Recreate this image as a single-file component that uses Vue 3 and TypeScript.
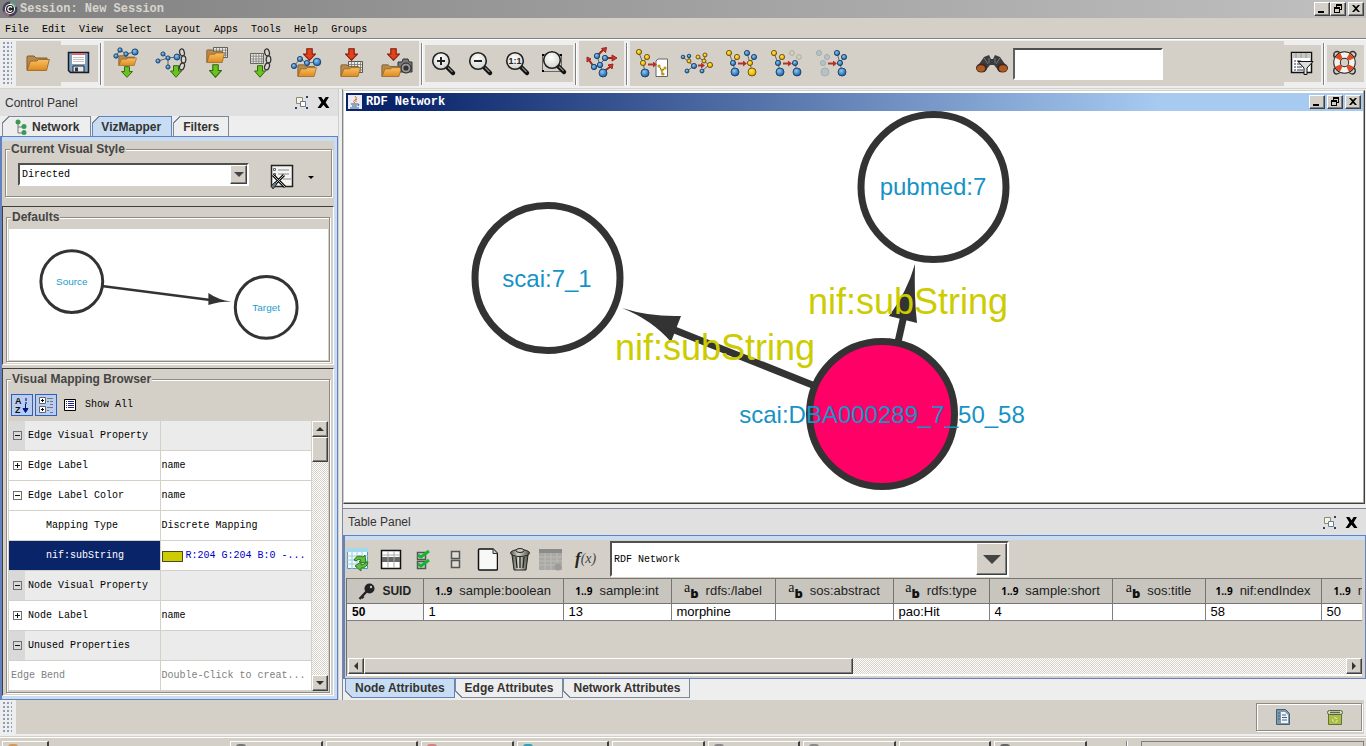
<script setup lang="ts">
import { ref } from 'vue'

type Ball = [number, number, number, string]
interface GraphIcon {
  label: string
  edges: string
  arrow: string
  balls: Ball[]
  page?: boolean
}

const menus = ['File', 'Edit', 'View', 'Select', 'Layout', 'Apps', 'Tools', 'Help', 'Groups']

const b = 'url(#gBlue)'
const y = 'url(#gYellow)'
const fadedBlue = '#b4c2ca'
const fadedYellow = '#d8cfae'

const tree = 'M9 12L13 22L17 16M13 22L15 31'
const treeRight = 'M27 12L30 22L34 16M30 22L32 31'

const graphIcons: GraphIcon[] = [
  {
    label: 'New network from selection',
    edges: tree,
    arrow: 'M18 23.5h6',
    page: true,
    balls: [[9, 11, 2.6, y], [17, 16, 2.6, y], [13, 22, 2.6, y], [15, 32, 4, b]],
  },
  {
    label: 'Clone network',
    edges: 'M8 16L14 21L14 15M14 21L19 25L12 30M23 16L29 20L30 15M29 20L34 24L27 30',
    arrow: 'M23 24.5h4',
    balls: [
      [8, 16, 1.8, b], [14, 15, 1.8, b], [14, 20, 2, y], [19, 25, 2.6, b], [12, 30, 2, b],
      [23, 16, 2, y], [30, 14, 2, y], [29, 20, 2, y], [35, 24, 2.6, y], [27, 30, 2, b],
    ],
  },
  {
    label: 'Invert node selection',
    edges: tree + treeRight,
    arrow: 'M18 22.5h6',
    balls: [
      [9, 12, 2.6, y], [17, 16, 2.6, y], [13, 22, 2.6, b], [15, 31, 4, b],
      [27, 12, 2.6, b], [34, 16, 2.6, b], [30, 22, 2.6, y], [32, 31, 4, y],
    ],
  },
  {
    label: 'Hide selected',
    edges: tree + 'M30 22L32 31',
    arrow: 'M18 22.5h6',
    balls: [
      [9, 12, 2.6, y], [17, 16, 2.6, y], [13, 22, 2.6, b], [15, 31, 4, b],
      [27, 12, 2.4, fadedYellow], [34, 16, 2.4, fadedYellow], [30, 22, 2.6, b], [32, 31, 4, b],
    ],
  },
  {
    label: 'Show all',
    edges: treeRight,
    arrow: 'M18 22.5h6',
    balls: [
      [9, 12, 2.6, fadedBlue], [17, 16, 2.6, fadedBlue], [13, 22, 2.6, fadedBlue], [15, 31, 4, fadedBlue],
      [27, 12, 2.6, b], [34, 16, 2.6, b], [30, 22, 2.6, b], [32, 31, 4, b],
    ],
  },
]

function rim(fill: string): string {
  if (fill === b) return '#1c3f63'
  if (fill === y) return '#6b4e0c'
  return '#a3aaa8'
}

interface PropertyRow {
  name: string
  value: string
  kind: 'group' | 'prop' | 'child' | 'selected' | 'unused'
  sign?: '+' | '-'
}
const rows: PropertyRow[] = [
  { name: 'Edge Visual Property', value: '', kind: 'group', sign: '-' },
  { name: 'Edge Label', value: 'name', kind: 'prop', sign: '+' },
  { name: 'Edge Label Color', value: 'name', kind: 'prop', sign: '-' },
  { name: 'Mapping Type', value: 'Discrete Mapping', kind: 'child' },
  { name: 'nif:subString', value: 'R:204 G:204 B:0 -...', kind: 'selected' },
  { name: 'Node Visual Property', value: '', kind: 'group', sign: '-' },
  { name: 'Node Label', value: 'name', kind: 'prop', sign: '+' },
  { name: 'Unused Properties', value: '', kind: 'group', sign: '-' },
  { name: 'Edge Bend', value: 'Double-Click to creat...', kind: 'unused' },
]

const columns = [
  { name: 'SUID', type: 'key', width: 76, value: '50' },
  { name: 'sample:boolean', type: 'num', width: 140, value: '1' },
  { name: 'sample:int', type: 'num', width: 108, value: '13' },
  { name: 'rdfs:/label', type: 'str', width: 104, value: 'morphine' },
  { name: 'sos:abstract', type: 'str', width: 118, value: '' },
  { name: 'rdfs:type', type: 'str', width: 96, value: 'pao:Hit' },
  { name: 'sample:short', type: 'num', width: 123, value: '4' },
  { name: 'sos:title', type: 'str', width: 93, value: '' },
  { name: 'nif:endIndex', type: 'num', width: 116, value: '58' },
  { name: 'nif:beginIndex', type: 'num', width: 132, value: '50' },
]

const taskColors = ['#777777', '', '#d98080', '#2aa5b8', '', '#8a8a8a', '#8a8a8a', '', '#666666']
const search = ref('')
</script>

<template>
  <div class="app">
    <svg class="defs" aria-hidden="true">
      <defs>
        <radialGradient id="gBlue" cx=".4" cy=".35" r=".7"><stop offset="0" stop-color="#8cc8f4" /><stop offset=".6" stop-color="#3f86c8" /><stop offset="1" stop-color="#1d4f86" /></radialGradient>
        <radialGradient id="gYellow" cx=".4" cy=".35" r=".7"><stop offset="0" stop-color="#ffe94a" /><stop offset=".6" stop-color="#f3bd10" /><stop offset="1" stop-color="#c08c10" /></radialGradient>
        <linearGradient id="gFolder" x2="0" y2="1"><stop offset="0" stop-color="#f9bf62" /><stop offset="1" stop-color="#e08a1c" /></linearGradient>
        <radialGradient id="gLens" cx=".45" cy=".35" r=".7"><stop offset="0" stop-color="#fff" /><stop offset="1" stop-color="#cfcfcb" /></radialGradient>
        <linearGradient id="gCan"><stop offset="0" stop-color="#55534a" /><stop offset=".4" stop-color="#d8d6c8" /><stop offset="1" stop-color="#55534a" /></linearGradient>
      </defs>
      <symbol id="folder" viewBox="0 0 24 16" preserveAspectRatio="none">
        <path d="M1 15V2q0-1 1-1h6l2 2h11v4" fill="#b98a4c" stroke="#7a5a30" />
        <path d="M1 15.4L4.5 6H11l1.5-1.500H23.4L20.5 15.4z" fill="url(#gFolder)" stroke="#8a5f20" stroke-width=".8" />
      </symbol>
      <symbol id="down" viewBox="0 0 12 13" preserveAspectRatio="none">
        <path d="M3.5.7h5V6h3L6 12.3.5 6h3z" stroke-width="1" />
      </symbol>
      <symbol id="grid" viewBox="0 0 15 12" preserveAspectRatio="none">
        <path d="M.5.5h14v11H.5z" fill="#eceae4" stroke="#555" />
        <path d="M.5 3.5h14M.5 6.5h14M.5 9h14M3.5.5v11M6.5.5v11M9.5.5v11M12.5.5v11" stroke="#777" stroke-width=".8" />
      </symbol>
      <symbol id="chain" viewBox="0 0 9 23">
        <g fill="#d8d6ce" stroke="#333" stroke-width="1.3">
          <ellipse cx="4" cy="4.500" rx="2.300" ry="3.600" transform="rotate(-15 4 4.500)" />
          <ellipse cx="5.500" cy="11.500" rx="2.300" ry="3.600" />
          <ellipse cx="4" cy="18.500" rx="2.300" ry="3.600" transform="rotate(20 4 18.500)" />
        </g>
      </symbol>
      <symbol id="float" viewBox="0 0 13 13">
        <path d="M1.500 1.500h6v6h-6z" fill="#f4f4ea" stroke="#8c8c6c" />
        <path d="M5.500 5.500h5v5h-5z" fill="#fff" stroke="#6b7c8c" />
        <path d="M11 0h2v2h-2zM0 11h2v2H0zM11 11h2v2h-2z" fill="#2d3d70" />
      </symbol>
      <symbol id="close" viewBox="0 0 12 12">
        <path d="M1 1h3l2 3 2-3h3L8 6l3.500 5H8.500L6 8l-2.500 3H.5L4 6z" fill="#000" />
      </symbol>
      <symbol id="lens" viewBox="0 0 37 37">
        <path d="M22 22l6 6" stroke="#111" stroke-width="4.500" stroke-linecap="round" />
        <path d="M23 22.500l4.500 4.500" stroke="#888" stroke-width="1.200" />
        <circle cx="16" cy="16" r="8.300" fill="url(#gLens)" stroke="#222" stroke-width="1.600" />
      </symbol>
    </svg>

    <header class="titlebar">
      <svg class="logo" viewBox="0 0 16 16" aria-hidden="true">
        <circle cx="8" cy="8" r="7.500" fill="#46405e" />
        <path d="M8 .5a7.500 7.500 0 0 1 7 5L8 8z" fill="#67a08b" /><path d="M1 11a7.500 7.500 0 0 0 6 4.500L8 8z" fill="#8f6a7c" />
        <circle cx="8" cy="8" r="5" fill="#fff" /><circle cx="8" cy="8" r="4" fill="#222" />
        <path d="M10 6.600a2.300 2.300 0 1 0 0 2.800" fill="none" stroke="#fff" stroke-width="1.300" />
      </svg>
      <h1>Session: New Session</h1>
      <div class="winbtns">
        <button class="winbtn" aria-label="Minimize"><svg viewBox="0 0 12 10"><path d="M2 7h6v2H2z" /></svg></button>
        <button class="winbtn" aria-label="Restore"><svg viewBox="0 0 12 10"><path d="M4 0h6v6H8V5h1V2H5v1H4zM2 3h6v6H2zM3 5v3h4V5z" fill-rule="evenodd" /></svg></button>
        <button class="winbtn spaced" aria-label="Close"><svg viewBox="0 0 12 10"><path d="M2 1h2l2 2 2-2h2L7 4.500 10 8H8L6 6 4 8H2l3-3.500z" /></svg></button>
      </div>
    </header>

    <nav class="menubar">
      <button v-for="m in menus" :key="m">{{ m }}</button>
    </nav>

    <div class="toolbar">
      <span class="grip"></span>
      <button class="tool big" aria-label="Open"><svg viewBox="0 0 45 45"><use href="#folder" x="10" y="14" width="24" height="16" /></svg></button>
      <button class="tool small" aria-label="Save">
        <svg viewBox="0 0 37 37">
          <path d="M7.500 7.500h20v20h-18l-2-2z" fill="#7f9fbd" stroke="#111c28" stroke-width="1.500" />
          <path d="M11 8h13v11H11z" fill="#fff" /><path d="M11 8h13v2H11z" fill="#d66" />
          <path d="M12 12.500h11M12 14.500h11M12 16.500h11" stroke="#c4c4c4" />
          <path d="M12 21h11v6H12z" fill="#e4e4e4" stroke="#222" /><path d="M14 22.500h3v4h-3z" fill="#335" />
        </svg>
      </button>
      <span class="sep"></span>
      <button class="tool big" aria-label="Import network from file">
        <svg viewBox="0 0 45 45">
          <use href="#folder" x="14" y="14" width="19" height="11" />
          <path d="M12 15L16 9L22 13L31 11" stroke="#567" fill="none" />
          <circle v-for="(c, i) in [[12, 15, 2.2], [16, 9, 2.2], [22, 13, 2.2], [31, 11, 3.1]]" :key="i" class="ball" :cx="c[0]" :cy="c[1]" :r="c[2]" />
          <use href="#down" class="green" x="17" y="25" width="12" height="12" />
        </svg>
      </button>
      <button class="tool big" aria-label="Import network from URL">
        <svg viewBox="0 0 45 45">
          <path d="M9 20L19 17L28 16M14 13L19 17V26" stroke="#567" fill="none" />
          <circle v-for="(c, i) in [[9, 20, 2.1], [14, 13, 2.1], [19, 17, 2.1], [28, 16, 3], [19, 26, 2.1]]" :key="i" class="ball" :cx="c[0]" :cy="c[1]" :r="c[2]" />
          <use href="#chain" x="29" y="7" width="9" height="23" />
          <use href="#down" class="green" x="21" y="24" width="12" height="13" />
        </svg>
      </button>
      <button class="tool big" aria-label="Import table from file">
        <svg viewBox="0 0 45 45">
          <use href="#grid" x="19" y="6" width="15" height="11" />
          <use href="#folder" x="12" y="8" width="19" height="14" />
          <use href="#down" class="green" x="15" y="23" width="13" height="14" />
        </svg>
      </button>
      <button class="tool big" aria-label="Import table from URL">
        <svg viewBox="0 0 45 45">
          <use href="#grid" x="11" y="12" width="14" height="11" />
          <use href="#chain" x="24" y="7" width="9" height="23" />
          <use href="#down" class="green" x="15" y="24" width="12" height="13" />
        </svg>
      </button>
      <button class="tool big" aria-label="Export network">
        <svg viewBox="0 0 45 45">
          <use href="#down" class="red" x="19" y="7" width="13" height="13" />
          <use href="#folder" x="13" y="23" width="20" height="13" />
          <path d="M10 25L16 18L23 22L33 21" stroke="#567" fill="none" />
          <circle v-for="(c, i) in [[10, 25, 2.6], [16, 18, 2.6], [23, 22, 2.6], [33, 21, 3.8]]" :key="i" class="ball" :cx="c[0]" :cy="c[1]" :r="c[2]" />
        </svg>
      </button>
      <button class="tool big" aria-label="Export table">
        <svg viewBox="0 0 45 45">
          <use href="#down" class="red" x="16" y="7" width="13" height="13" />
          <use href="#grid" x="19" y="20" width="15" height="12" />
          <use href="#folder" x="11" y="23" width="21" height="13" />
        </svg>
      </button>
      <button class="tool big" aria-label="Export image">
        <svg viewBox="0 0 45 45">
          <use href="#down" class="red" x="13" y="7" width="13" height="13" />
          <path d="M24 21h4l1-3h5l1 3h3v10H24z" fill="#777" stroke="#333" />
          <use href="#folder" x="7" y="23" width="21" height="13" />
          <circle cx="32" cy="27" r="5" fill="#999" stroke="#222" /><circle cx="32" cy="27" r="2.600" fill="#333" />
        </svg>
      </button>
      <span class="sep"></span>
      <button class="tool small" aria-label="Zoom in"><svg viewBox="0 0 37 37"><use href="#lens" width="37" height="37" /><path d="M12 16h8M16 12v8" stroke="#222" stroke-width="2" /></svg></button>
      <button class="tool small" aria-label="Zoom out"><svg viewBox="0 0 37 37"><use href="#lens" width="37" height="37" /><path d="M12 16h8" stroke="#222" stroke-width="2" /></svg></button>
      <button class="tool small" aria-label="Zoom to 100%"><svg viewBox="0 0 37 37"><use href="#lens" width="37" height="37" /><text x="16" y="19" text-anchor="middle" class="ratio">1:1</text></svg></button>
      <button class="tool small" aria-label="Zoom to fit"><svg viewBox="0 0 37 37"><path d="M6.500 9.500h19v17h-19z" fill="none" stroke="#000" stroke-dasharray="1 1" /><path d="M6 9h2v2H6zM24 9h2v2h-2zM6 25h2v2H6z" /><use href="#lens" y="-1" width="37" height="37" /></svg></button>
      <span class="sep"></span>
      <button class="tool big" aria-label="Apply layout">
        <svg viewBox="0 0 45 45">
          <path d="M18 15L21 24L26 17M15 26L21 24L24 32" stroke="#567" fill="none" />
          <g stroke="#a3241c" stroke-width="2" fill="#c4392c">
            <path d="M18 15L24 9M26 17H34M15 26L10 19M24 31L31 26" />
            <path d="M22.500 7.500l5-1-1 5zM33 14l5 3-5 3zM8 21l0-5 4 2zM29 24l5-1-1 5z" stroke-width="1" />
          </g>
          <circle v-for="(c, i) in [[24, 32, 4], [15, 26, 2.7], [18, 15, 2.7], [26, 17, 2.7], [21, 24, 2.7]]" :key="i" class="ball" :cx="c[0]" :cy="c[1]" :r="c[2]" />
        </svg>
      </button>
      <span class="sep"></span>
      <div class="wide">
        <button v-for="g in graphIcons" :key="g.label" class="tool big" :aria-label="g.label">
          <svg viewBox="0 0 45 45">
            <template v-if="g.page">
              <path d="M26 20l2-2h9.500v17.500H26z" fill="#fff" stroke="#666" />
              <path d="M29 25L32 30L35 27M32 30V34" stroke="#555" fill="none" />
              <circle v-for="(c, i) in [[29, 25], [35, 27], [32, 29], [33, 33]]" :key="i" :cx="c[0]" :cy="c[1]" r="1.600" fill="#c89a00" />
            </template>
            <path :d="g.edges" stroke="#666" stroke-width="1" fill="none" />
            <path :d="g.arrow" stroke="#b4302a" stroke-width="2" marker-end="url(#mRed)" />
            <circle v-for="(c, i) in g.balls" :key="'b' + i" :cx="c[0]" :cy="c[1]" :r="c[2]" :fill="c[3]" :stroke="rim(c[3])" stroke-width=".9" />
          </svg>
        </button>
        <svg class="defs" aria-hidden="true"><marker id="mRed" markerUnits="userSpaceOnUse" markerWidth="5" markerHeight="6" refX="1" refY="3" orient="auto"><path d="M0 0l4 3-4 3z" fill="#b4302a" /></marker></svg>
        <div class="search">
          <svg viewBox="0 0 34 20" aria-hidden="true">
            <path d="M9 3l5-2 2 4h2l2-4 5 2 7 10-8 4-5-6h-4l-5 6-8-4z" fill="#3c3c3e" />
            <path d="M9 4l4 6M25 4l-4 6M14 4v5M20 4v5" stroke="#77777b" />
            <ellipse cx="6.500" cy="14" rx="5.500" ry="4.500" fill="#3a2a22" /><ellipse cx="27.500" cy="14" rx="5.500" ry="4.500" fill="#3a2a22" />
            <ellipse cx="6" cy="14.500" rx="4" ry="3.200" fill="#b05a20" /><ellipse cx="28" cy="14.500" rx="4" ry="3.200" fill="#b05a20" />
          </svg>
          <input v-model="search" type="text" aria-label="Search" />
        </div>
      </div>
      <button class="tool small" aria-label="Filter table">
        <svg viewBox="0 0 37 37">
          <path d="M7.500 7.500h20v20h-20z" fill="#fff" stroke="#111" stroke-width="1.500" />
          <path d="M8 8h19v5H8z" fill="#c8c8c4" /><path d="M12 8v5M17 8v5M22 8v5" stroke="#999" />
          <path d="M10 16h2M10 19h2M10 22h2M10 25h2M13 16h4M13 19h4M13 22h5M13 25h6" stroke="#335" />
          <path d="M14 16.500h15l-6 6.500v6.500h-3v-6.500z" fill="#dcdcdc" stroke="#111" />
        </svg>
      </button>
      <span class="sep"></span>
      <button class="tool small" aria-label="Help">
        <svg viewBox="0 0 37 37">
          <path d="M7.500 7.500q3-2 5 0M23 7.500q3-2 5 0t-.5 5M7.500 7.500q-1.500 3 0 5M7.500 23q-1.500 3 0 5t5 0M27.500 23q1.500 3 0 5t-5 0" fill="none" stroke="#333" stroke-width="1.400" />
          <circle cx="17.500" cy="17.500" r="7.500" fill="none" stroke="#222" stroke-width="7.500" />
          <circle cx="17.500" cy="17.500" r="7.500" fill="none" stroke="#f2f2ee" stroke-width="5.600" />
          <circle cx="17.500" cy="17.500" r="7.500" fill="none" stroke="#e04a20" stroke-width="5.600" stroke-dasharray="5 6.780" stroke-dashoffset="-3.400" />
        </svg>
      </button>
    </div>

    <main class="body">
      <section class="left">
        <header class="panelhead">
          <h2>Control Panel</h2>
          <button aria-label="Float window"><svg><use href="#float" /></svg></button>
          <button aria-label="Close panel"><svg><use href="#close" /></svg></button>
        </header>
        <div class="tabs top" role="tablist">
          <button role="tab" class="tab net">
            <svg viewBox="0 0 12 16" aria-hidden="true"><path d="M3 3V14H9M3 8H9" stroke="#777" fill="none" /><circle cx="3" cy="3" r="2.500" fill="#3a9a55" /><circle cx="9" cy="7.500" r="2.500" fill="#3a9a55" /><circle cx="9" cy="13.500" r="2.500" fill="#3a9a55" /></svg>
            Network
          </button>
          <button role="tab" class="tab active" aria-selected="true">VizMapper</button>
          <button role="tab" class="tab">Filters</button>
        </div>
        <div class="frame">
          <fieldset class="style">
            <legend>Current Visual Style</legend>
            <div class="stylerow">
              <div class="combo">
                <select aria-label="Visual style"><option>Directed</option></select>
                <span class="drop"></span>
              </div>
              <button class="styleopt" aria-label="Style options">
                <svg viewBox="0 0 26 26">
                  <path d="M2.500 1.500h21v21h-21z" fill="#f4f4f2" stroke="#222" stroke-width="1.500" />
                  <path d="M9 6h11M9 10h11M14 15h8" stroke="#888" /><path d="M4.500 4.500h2v2h-2zM4.500 9.500h2v2h-2z" fill="#fff" stroke="#666" />
                  <path d="M4 11l12 12M15 11L3 23" stroke="#111" stroke-width="3" /><path d="M4 11l12 12M15 11L3 23" stroke="#bbb" stroke-width="1" />
                  <path d="M2 22l4-4 2 2-4 5z" fill="#678" stroke="#222" stroke-width=".8" />
                </svg>
              </button>
              <button class="styledrop" aria-label="Style menu"></button>
            </div>
          </fieldset>
          <div class="well">
            <fieldset class="defaults">
              <legend>Defaults</legend>
              <svg class="preview" viewBox="0 0 320 131" preserveAspectRatio="xMidYMid meet">
                <path d="M93 57L202 71" stroke="#333" stroke-width="2.500" />
                <path d="M200 64q10 7 23 8.500q-12 0-23 3.500z" fill="#333" />
                <circle cx="63" cy="52.500" r="31" /><circle cx="258" cy="78.500" r="31" />
                <text x="63" y="56">Source</text><text x="258" y="82">Target</text>
              </svg>
            </fieldset>
          </div>
          <div class="well browser">
            <fieldset>
              <legend>Visual Mapping Browser</legend>
              <div class="browserbar">
                <button class="toggle" aria-label="Sort alphabetically"><svg viewBox="0 0 20 20"><text x="3" y="9" class="az">A</text><text x="3" y="18" class="az">Z</text><path d="M14 3v3M14 7v2" stroke="#003" /><path d="M13.500 9v8M11 13.500l2.500 4 2.500-4z" stroke="#00158a" fill="#00158a" /></svg></button>
                <button class="toggle" aria-label="Categories"><svg viewBox="0 0 20 20"><path d="M3.500 2.500h6v6h-6zM3.500 11.500h6v6h-6z" fill="#fff" stroke="#666" /><path d="M5 5.500h3M6.500 4v3M5 14.500h3M6.500 13v3" stroke="#000" /><path d="M11 3.500h6M11 6.500h2M14 6.500h3M14 9.500h3M11 12.500h6M11 15.500h2M14 17.500h3" stroke="#777" /></svg></button>
                <button class="showall"><svg viewBox="0 0 12 12" aria-hidden="true"><path d="M.5.5h11v11H.5z" fill="#fff" stroke="#000" /><path d="M2 2.500h1M2 4.500h1M2 6.500h1M2 8.500h1M4 2.500h6M4 4.500h6M4 6.500h6M4 8.500h6" stroke="#228" /></svg>Show All</button>
              </div>
              <div class="props">
                <table>
                  <tbody>
                    <tr v-for="r in rows" :key="r.name" :class="r.kind">
                      <td><div class="cell"><span class="gutter"><i v-if="r.sign" class="sign" :class="{ plus: r.sign === '+' }"></i></span>{{ r.name }}</div></td>
                      <td><div class="cell"><span v-if="r.kind === 'selected'" class="swatch"></span>{{ r.value }}</div></td>
                    </tr>
                  </tbody>
                </table>
                <div class="vscroll">
                  <button class="sb up" aria-label="Scroll up"></button>
                  <span class="thumb"></span>
                  <span class="track"></span>
                  <button class="sb down" aria-label="Scroll down"></button>
                </div>
              </div>
            </fieldset>
          </div>
        </div>
      </section>

      <section class="right">
        <article class="network">
          <header>
            <svg class="java" viewBox="0 0 14 14" aria-hidden="true"><path d="M0 0h14v14H0z" fill="#e8ecf2" /><path d="M7 1q3 2 0 4t0 3M9 4q-2 1-1 3" stroke="#e07020" fill="none" /><path d="M3 9h7M4 11h5M2 13h9M10 9q2 0 0 2" stroke="#3a5c8c" fill="none" /></svg>
            <h2>RDF Network</h2>
            <div class="winbtns">
              <button class="winbtn" aria-label="Minimize network"><svg viewBox="0 0 12 10"><path d="M2 7h6v2H2z" /></svg></button>
              <button class="winbtn spaced" aria-label="Restore network"><svg viewBox="0 0 12 10"><path d="M4 0h6v6H8V5h1V2H5v1H4zM2 3h6v6H2zM3 5v3h4V5z" fill-rule="evenodd" /></svg></button>
              <button class="winbtn spaced" aria-label="Close network"><svg viewBox="0 0 12 10"><path d="M2 1h2l2 2 2-2h2L7 4.500 10 8H8L6 6 4 8H2l3-3.500z" /></svg></button>
            </div>
          </header>
          <svg class="graph" role="img" aria-label="RDF Network graph">
            <g transform="translate(-346 -111)">
              <g stroke="#333" stroke-width="7" fill="none">
                <path d="M815 386L672 329" /><path d="M898 342L907 302" />
              </g>
              <path d="M622 308q28 9 59 8l-10 26q-19-22-49-34z" fill="#333" />
              <path d="M915 264q-1 33 2 59l-28-7q18-24 26-52z" fill="#333" />
              <g class="nodes"><circle cx="547.500" cy="278" r="72.500" /><circle cx="933.500" cy="187" r="72.500" /><circle cx="882" cy="414" r="72.500" class="pink" /></g>
              <g class="nlabel"><text x="547" y="287">scai:7_1</text><text x="933" y="195">pubmed:7</text><text x="882" y="423">scai:DBA000289_7_50_58</text></g>
              <g class="elabel"><text x="715" y="360">nif:subString</text><text x="908" y="314">nif:subString</text></g>
            </g>
          </svg>
        </article>

        <article class="tablepanel">
          <header class="panelhead">
            <h2>Table Panel</h2>
            <button aria-label="Float table panel"><svg><use href="#float" /></svg></button>
            <button aria-label="Close table panel"><svg><use href="#close" /></svg></button>
          </header>
          <div class="tframe">
            <div class="tbar">
              <button aria-label="Refresh table"><svg viewBox="0 0 24 24"><path d="M1.500 1.500h20v20h-20z" fill="#f4fbff" stroke="#4a9cc4" /><path d="M1 1h21v4H1z" fill="#a4d8ee" /><path d="M1 9h21M1 13h21M1 17h21M6 5v17M11 5v17M16 5v17" stroke="#9cc8dc" /><path d="M8 13q3-6 9-3l2-2 1 8-7-1 2-2q-3-2-5 1zM22 15q-1 6-7 6l0 3-6-5 6-4 0 3q3 0 5-3z" fill="#5fc040" stroke="#2f7a1c" /></svg></button>
              <button aria-label="Show columns"><svg viewBox="0 0 24 24"><path d="M3.500 3.500h19v18h-19z" fill="#fff" stroke="#111" stroke-width="1.500" /><path d="M4 10h18v5H4z" fill="#666" /><path d="M10 4v17M16 4v17M4 8h18" stroke="#aaa" /></svg></button>
              <button aria-label="Select all"><svg viewBox="0 0 24 24"><path d="M7.500 5.500h8v7h-8zM7.500 14.500h8v7h-8z" fill="none" stroke="#555" stroke-width="1.500" /><path d="M8 8l3 2 8-6M8 17l3 2 8-6" stroke="#10b830" stroke-width="3" fill="none" /></svg></button>
              <button aria-label="Clear selection"><svg viewBox="0 0 24 24"><path d="M9.500 4.500h8v7h-8zM9.500 13.500h8v7h-8z" fill="#dedbd3" stroke="#555" stroke-width="1.500" /></svg></button>
              <button aria-label="Create column"><svg viewBox="0 0 24 24"><path d="M4.500 3q0-1 1-1H19l4.500 4.500V22q0 1-1 1h-17q-1 0-1-1z" fill="#f8f8f6" stroke="#111" stroke-width="1.500" /><path d="M19 2v4.500h4.500" fill="#ccc" stroke="#333" /></svg></button>
              <button aria-label="Delete column"><svg viewBox="0 0 24 24"><path d="M6 8h16l-2 15H8z" fill="url(#gCan)" stroke="#222" /><path d="M10 10l1 11M14 10v11M18 10l-1 11" stroke="#222" stroke-width="1.300" /><ellipse cx="14" cy="6" rx="9.500" ry="3.500" fill="url(#gCan)" stroke="#222" /><ellipse cx="14" cy="3.500" rx="4" ry="2" fill="#ccc9b8" stroke="#222" /></svg></button>
              <button aria-label="Delete table" disabled><svg viewBox="0 0 24 24"><path d="M1 2h23v21H1z" fill="#aaa9a6" /><path d="M1 2h23v4H1z" fill="#8b8b8a" /><path d="M1 10h23M1 14h23M1 18h23M7 6v17M13 6v17M19 6v17" stroke="#bcbbb8" /><circle cx="20" cy="20" r="3.500" fill="#9b9b99" /></svg></button>
              <button class="fx" aria-label="Function builder"><b>f</b>(x)</button>
              <div class="combo large">
                <select aria-label="Table"><option>RDF Network</option></select>
                <span class="drop"></span>
              </div>
            </div>
            <div class="tablebox">
              <table class="data">
                <colgroup><col v-for="c in columns" :key="c.name" :style="{ width: c.width + 'px' }" /></colgroup>
                <thead>
                  <tr>
                    <th v-for="c in columns" :key="c.name" :class="c.type">
                      <div>
                        <svg v-if="c.type === 'key'" viewBox="0 0 17 17" aria-hidden="true"><circle cx="11.500" cy="5.500" r="5" fill="#222" /><circle cx="13" cy="4" r="1.200" fill="#c8c5be" /><path d="M9 8l-7.500 8M3.500 13l2 2" stroke="#222" stroke-width="2.500" /></svg>
                        <span v-else-if="c.type === 'num'" class="ic-num">1..9</span>
                        <span v-else class="ic-str"><i>a</i><b>b</b></span>
                        <span>{{ c.name }}</span>
                      </div>
                    </th>
                  </tr>
                </thead>
                <tbody>
                  <tr><td v-for="c in columns" :key="c.name">{{ c.value }}</td></tr>
                </tbody>
              </table>
              <div class="hscroll">
                <button class="sb leftb" aria-label="Scroll left"></button>
                <span class="thumb"></span>
                <span class="track"></span>
                <button class="sb rightb" aria-label="Scroll right"></button>
              </div>
            </div>
          </div>
          <div class="tabs bottom" role="tablist">
            <button role="tab" class="tab active" aria-selected="true">Node Attributes</button>
            <button role="tab" class="tab">Edge Attributes</button>
            <button role="tab" class="tab">Network Attributes</button>
          </div>
        </article>
      </section>
    </main>

    <footer class="status">
      <span class="grip"></span>
      <div class="statusfill">
        <div class="statusbox">
          <button aria-label="Task history"><svg viewBox="0 0 16 18"><path d="M1.500 1.500h9l4 4v11h-13z" fill="#7d98ac" stroke="#44617c" /><path d="M6 4h4l3 3v8H6z" fill="#f2f5f8" /><path d="M7 7h4M7 9.500h5M7 12h5M3 5h2M3 8h2M3 11h2" stroke="#44617c" /></svg></button>
          <button aria-label="Free memory"><svg viewBox="0 0 16 18"><path d="M1.500 6h13v10.500h-13z" fill="#a9bd48" stroke="#62742c" /><rect x=".5" y="2.500" width="15" height="4" rx="2" fill="#d8dcc8" stroke="#56633a" /><path d="M3 4.500h10" stroke="#5c6650" stroke-width="1.500" /><circle cx="8" cy="12" r="2.300" fill="none" stroke="#e8f0b8" stroke-dasharray="3 1.500" /></svg></button>
        </div>
      </div>
    </footer>
    <div class="taskbar">
      <button class="task start" aria-label="Start"><i></i></button>
      <div class="tasks">
        <button v-for="(c, i) in taskColors" :key="i" class="task" :aria-label="'Window ' + (i + 1)"><i :style="{ background: c || 'none' }"></i></button>
      </div>
      <span class="tasksep"></span>
      <div class="tray"></div>
    </div>
  </div>
</template>

<style>
body { margin: 0; overflow: hidden; }
</style>

<style scoped>
* { box-sizing: border-box; }
.app {
  --face: #d4d0c8; --mono: "Liberation Mono", monospace; --sans: "Liberation Sans", sans-serif;
  display: flex; flex-direction: column; height: 100vh; background: #eeeeee; font: 12px/14px var(--sans); color: #333;
}
button { font: inherit; color: inherit; background: none; border: 0; padding: 0; }
h1, h2 { margin: 0; font: inherit; }
svg { display: block; }
.defs { position: absolute; width: 0; height: 0; }
.green { fill: #6cc21c; stroke: #2f6a10; }
.red { fill: #e4401c; stroke: #7c1c0c; }
.ball { fill: url(#gBlue); stroke: #1c3f63; stroke-width: 0.9; }

.titlebar { display: flex; align-items: center; height: 18px; padding: 0 2px; background: linear-gradient(90deg, #808080, #c0c0c0); flex: none; }
.logo { width: 16px; height: 16px; margin-right: 2px; }
.titlebar h1 { font: bold 12px/16px var(--mono); color: #d8d5cd; }
.winbtns { display: flex; margin-left: auto; }
.winbtn { width: 16px; height: 14px; background: var(--face); border: 1px solid; border-color: #fff #404040 #404040 #fff; box-shadow: inset -1px -1px 0 #808080; }
.winbtn svg { width: 12px; height: 10px; margin: 1px; fill: #000; }
.spaced { margin-left: 2px; }

.menubar { display: flex; gap: 13px; height: 21px; padding: 3px 5px 0; background: var(--face); border-bottom: 1px solid #808080; font: 10px/17px var(--mono); flex: none; }
.menubar button { color: #000; }

.toolbar { display: flex; align-items: center; height: 50px; padding: 0 2px; background: #eeeeee; flex: none; box-shadow: inset 0 1px 0 #fff; border-bottom: 1px solid #d6d3cc; }
.grip { width: 10px; align-self: stretch; margin: 2px 3px 2px 0; background: radial-gradient(circle, #8fa0b4 1px, transparent 1px) 0 0 / 4px 4px; }
.toolbar .grip { margin-right: 4px; }
.tool { background: var(--face); flex: none; }
.big, .big svg { width: 45px; height: 45px; }
.small, .small svg { width: 37px; height: 37px; }
.sep { width: 2px; height: 42px; margin: 0 2px; background: linear-gradient(90deg, #808080 50%, #fff 50%); flex: none; }
.ratio { font: bold 9px var(--sans); fill: #222; }
.wide { display: flex; flex: 1; height: 45px; background: var(--face); }
.search { display: flex; align-items: center; gap: 4px; margin: 0 121px 0 auto; }
.search svg { width: 34px; height: 20px; }
.search input { width: 150px; height: 32px; background: #fff; border: 2px solid; border-color: #505050 #fff #fff #606060; font: 12px var(--mono); }

.body { display: flex; flex: 1; min-height: 0; }
.left { display: flex; flex-direction: column; width: 339px; flex: none; border-right: 1px solid #cfcfcf; }
.panelhead { display: flex; align-items: center; gap: 9px; height: 27px; padding: 0 8px 0 5px; background: #e0e0e0; flex: none; }
.panelhead h2 { margin-right: auto; font: 12px/14px var(--sans); color: #333; }
.panelhead svg { width: 13px; height: 13px; }

.tabs { display: flex; background: #eeeeee; flex: none; position: relative; z-index: 1; }
.tab { position: relative; display: flex; align-items: center; height: 20px; border: 1px solid #7a8a99; padding: 0 9px; font: bold 12px/14px var(--sans); background: #eeeeee; color: #333; margin-right: 1px; }
.tab.active { background: #c8ddf2; border-color: #6382bf; }
.tab::before { content: ""; position: absolute; left: -1px; width: 7px; height: 7px; }
.top { padding-left: 2px; height: 20px; }
.top .tab { border-bottom: 0; }
.top .tab::before { top: -1px; background: linear-gradient(135deg, #eee 44%, #7a8a99 44% 58%, transparent 58%); }
.top .net { padding-right: 11px; padding-left: 12px; }
.net svg { width: 12px; height: 16px; margin-right: 5px; }
.top .tab.active { padding: 0 10px 0 8px; }

.frame { flex: 1; display: flex; flex-direction: column; min-height: 0; background: var(--face); border: 1px solid #6382bf; box-shadow: inset 0 4px 0 #c8ddf2, inset -3px 0 0 #c8ddf2, inset 0 -3px 0 #c8ddf2; padding: 5px 3px 3px 0; border-left-width: 2px; }
fieldset { margin: 0; padding: 0; border: 1px solid #8e8b85; box-shadow: 1px 1px 0 #fff, inset 1px 1px 0 #fff; min-width: 0; }
legend { margin-left: 2px; padding: 0 1px; background: var(--face); font: bold 12px/14px var(--sans); color: #444; }
.style { height: 55px; margin: 0 2px 9px 3px; flex: none; }
.style legend { margin-left: 4px; }
.stylerow { display: flex; align-items: center; padding: 7px 0 0 12px; }
.combo { display: grid; grid-template-columns: 1fr 17px; width: 231px; height: 23px; border: 2px solid; border-color: #505050 #fff #fff #505050; background: #fff; }
.stylerow .combo { margin-bottom: 5px; }
.combo select { grid-area: 1 / 1 / 2 / 3; appearance: none; border: 0; padding: 1px 2px 0; background: #fff; font: 10px/18px var(--mono); color: #000; }
.drop { grid-area: 1 / 2; display: grid; place-items: center; pointer-events: none; background: var(--face); border: 1px solid; border-color: #fff #404040 #404040 #fff; box-shadow: inset -1px -1px 0 #808080; }
.drop::before { content: ""; border: 5px solid transparent; border-top-color: #444; border-bottom: 0; }
.styleopt { margin-left: 20px; }
.styleopt svg { width: 26px; height: 26px; }
.styledrop { margin-left: 13px; border: 3px solid transparent; border-top-color: #000; border-bottom: 0; }

.well { border: 1px solid; border-color: #404040 #fff #fff #404040; padding: 3px 3px 2px; margin-bottom: 3px; flex: none; }
.preview { width: 100%; height: 131px; background: #fff; }
.defaults { padding: 5px 1px 1px 2px; }
.preview circle { fill: #fff; stroke: #333; stroke-width: 3; }
.preview text { font: 10px var(--sans); fill: #1e9bcb; text-anchor: middle; }
.browser { flex: 1; margin-bottom: 0; padding-bottom: 0; }
.browser fieldset { padding: 0 1px 1px 2px; }
.browserbar { display: flex; gap: 2px; padding: 8px 2px 5px; align-items: center; }
.toggle { width: 22px; height: 22px; background: #b9cdf0; border: 1px solid #2d5fc0; }
.toggle svg { width: 20px; height: 20px; }
.az { font: bold 9px var(--sans); fill: #111; }
.showall { display: flex; align-items: center; gap: 9px; margin-left: 5px; font: 10px/14px var(--mono); color: #000; }
.showall svg { width: 12px; height: 12px; }
.props { display: grid; grid-template-columns: 1fr 16px; }
.props table { width: 100%; table-layout: fixed; border-collapse: separate; border-spacing: 0; background: #fff; font: 10px/14px var(--mono); color: #000; }
.props td { padding: 0; height: 30px; border-bottom: 1px solid #d4d0c8; border-right: 1px solid #d4d0c8; }
.cell { display: flex; align-items: center; height: 29px; padding: 1px 0 0 1px; white-space: nowrap; }
td:first-child .cell { padding-left: 0; }
.gutter { width: 16px; height: 29px; margin: -1px 3px 0 0; display: grid; place-items: center; }
.group td { background: #ebebeb; }
.group .gutter { background: #d9d9d9; }
.sign { width: 9px; height: 9px; border: 1px solid #707070; background: linear-gradient(#111, #111) center / 5px 1px no-repeat; }
.sign.plus { background: linear-gradient(#111, #111) center / 5px 1px no-repeat, linear-gradient(#111, #111) center / 1px 5px no-repeat; }
.child .gutter, .selected .gutter { margin-right: 21px; }
.unused .gutter { display: none; }
.unused td { color: #808080; }
.unused td:first-child .cell { padding-left: 2px; }
.selected td { color: #0000c8; }
.selected td:first-child { background: #0a246a; color: #fff; }
.swatch { width: 21px; height: 11px; margin-right: 3px; background: #cccc00; border: 1px solid #4a4a20; flex: none; }
.vscroll { display: flex; flex-direction: column; width: 16px; }
.sb, .thumb { display: grid; place-items: center; background: var(--face); border: 1px solid; border-color: #fff #404040 #404040 #fff; box-shadow: inset -1px -1px 0 #808080; flex: none; }
.sb { width: 16px; height: 16px; }
.sb::before { content: ""; border: 4px solid transparent; }
.up::before { border-bottom-color: #333; border-top: 0; }
.down::before { border-top-color: #333; border-bottom: 0; }
.leftb::before { border-right-color: #333; border-left: 0; }
.rightb::before { border-left-color: #333; border-right: 0; }
.vscroll .thumb { width: 16px; height: 25px; }
.track { flex: 1; background: repeating-conic-gradient(#fff 0 25%, #d4d0c8 0 50%) 0 0 / 2px 2px; }

.right { display: flex; flex-direction: column; flex: 1; min-width: 0; margin-left: 3px; border-left: 1px solid #808894; }
.network { display: flex; flex-direction: column; flex: 1; min-height: 0; margin: 1px 1px 4px 0; padding: 2px 1px 1px 2px; background: #fff; border: 1px solid; border-color: #d4d0c8 #404040 #404040 #d4d0c8; box-shadow: inset -1px -1px 0 #a8a59d; }
.network header { display: flex; align-items: center; height: 18px; padding: 0 2px; background: linear-gradient(90deg, #0a246a 5%, #a6caf0 80%); flex: none; }
.java { width: 14px; height: 14px; margin-right: 4px; }
.network h2 { font: bold 12px/16px var(--mono); color: #fff; }
.graph { flex: 1; width: 100%; min-height: 0; background: #fff; }
.nodes circle { fill: #fff; stroke: #333; stroke-width: 7; }
.nodes .pink { fill: #ff0066; }
.nlabel text { font: 24px var(--sans); fill: #1593c6; text-anchor: middle; }
.elabel text { font: 36px var(--sans); fill: #cccc00; text-anchor: middle; }

.tablepanel { flex: none; border-top: 1px solid #808894; }
.tablepanel .panelhead { height: 26px; }
.tframe { border: 1px solid #6382bf; border-left-width: 2px; box-shadow: inset 0 4px 0 #c8ddf2; padding: 4px 3px 2px 1px; background: var(--face); }
.tbar { display: flex; align-items: center; gap: 8px; height: 38px; }
.tbar button, .tbar svg { width: 24px; height: 24px; }
.tbar .fx { width: 28px; padding-left: 5px; color: #444; font: italic 14px/24px "Liberation Serif", serif; display: flex; }
.fx b { font-size: 17px; color: #222; }
.combo.large { width: 399px; height: 36px; grid-template-columns: 1fr 31px; margin-left: 4px; }
.large .drop::before { border-width: 9px 9px 0; }
.tablebox { overflow: hidden; border-left: 1px solid #707070; }
.data { width: 1106px; table-layout: fixed; border-collapse: collapse; }
.data th { padding: 0; height: 25px; border: 1px solid #787570; border-left: 0; background: #c8c5be; font: 13px/14px var(--sans); color: #222; }
.data th div { display: flex; align-items: center; justify-content: center; gap: 7px; white-space: nowrap; }
.data th.key { font: bold 12px/14px var(--sans); }
.data th:last-child div { justify-content: flex-start; padding-left: 12px; }
.key svg { width: 17px; height: 17px; }
.ic-num { font: bold 10px/14px "Open Sans", sans-serif; color: #000; }
.ic-str { display: flex; align-items: center; font: bold 13px/16px "Open Sans", sans-serif; color: #111; }
.ic-str i { padding-bottom: 6px; font: 14px/16px "Liberation Serif", serif; }
.ic-str b { padding-top: 3px; }
.data td { height: 17px; padding: 0 5px; border: 1px solid #808080; border-left: 0; background: #fff; font: 13px/14px var(--sans); color: #000; }
.data td:first-child { font: bold 12px/14px var(--sans); background: #f4f4f4; }
.hscroll { display: flex; margin-top: 37px; padding-left: 1px; border-bottom: 2px solid #fff; }
.hscroll .thumb { width: 489px; height: 16px; }
.bottom { padding-left: 2px; height: 21px; }
.bottom .tab { height: 19px; border-top: 0; margin-right: 0; background: #eee; }
.bottom .tab.active { background: #c8ddf2; }
.bottom .tab::before { bottom: -1px; background: linear-gradient(45deg, #eee 44%, #7a8a99 44% 58%, transparent 58%); }

.status { display: flex; height: 34px; padding: 0 2px; flex: none; }
.statusfill { display: flex; justify-content: flex-end; flex: 1; background: var(--face); padding: 3px 2px; }
.status .grip { margin: 1px 4px 1px 0; }
.statusbox { display: flex; gap: 36px; align-items: center; padding: 0 18px; border: 1px solid #8e8b85; box-shadow: 1px 1px 0 #fff, inset 1px 1px 0 #fff; }
.statusbox svg { width: 16px; height: 18px; }
.taskbar { display: flex; height: 9px; margin-top: 3px; padding: 3px 2px 0; background: var(--face); border-top: 1px solid #fff; box-shadow: 0 -1px 0 #d4d0c8; flex: none; overflow: hidden; }
.task { display: flex; align-items: flex-start; height: 22px; border: 1px solid; border-color: #fff #404040 #404040 #fff; border-right-width: 2px; }
.task i { display: block; width: 10px; height: 3px; margin: 2px 0 0 5px; border-radius: 4px 4px 0 0; }
.start { width: 47px; margin-right: 181px; flex: none; }
.start i { background: #d89858; }
.tasks { display: grid; grid-template-columns: repeat(9, 1fr); gap: 3px; flex: 1; }
.tasksep { width: 2px; height: 22px; margin: 0 13px 0 39px; border-left: 1px solid #808080; border-right: 1px solid #fff; }
.tray { width: 223px; height: 22px; border: 1px solid #808080; flex: none; }
</style>
